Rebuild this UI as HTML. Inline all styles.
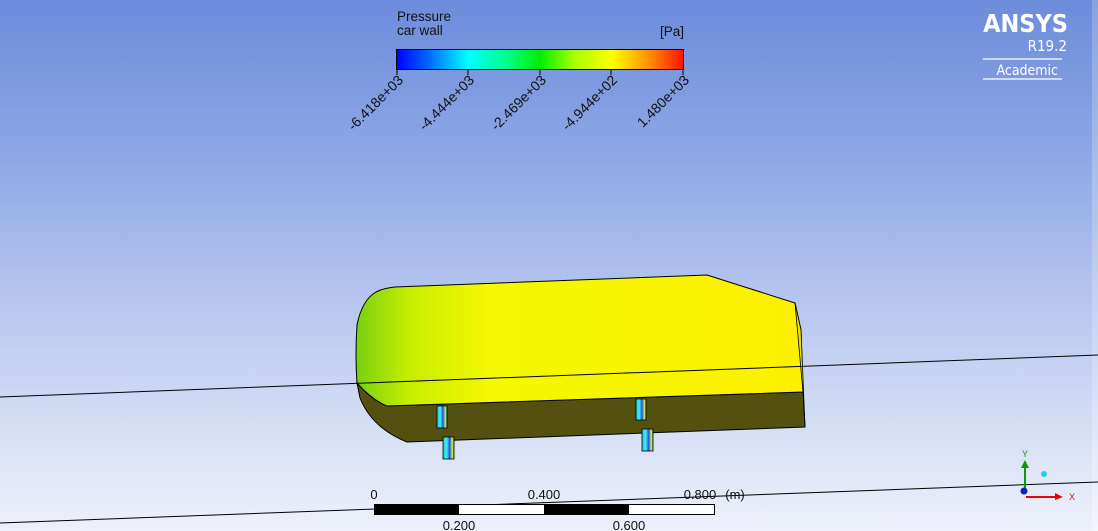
<!DOCTYPE html>
<html><head><meta charset="utf-8"><style>
html,body{margin:0;padding:0;}
body{width:1098px;height:531px;overflow:hidden;position:relative;font-family:"Liberation Sans",sans-serif;
background:linear-gradient(to bottom,#6c8cdc 0%,#8ea8e4 30%,#b4c4ee 55%,#d6def5 80%,#eef1fa 100%);}
.strip{position:absolute;right:0;top:0;width:6px;height:531px;background:linear-gradient(to bottom,#8aa2e2,#c8d4f2 60%,#f4f6fc);}
svg{position:absolute;left:0;top:0;}
</style></head><body>
<div class="strip"></div>
<svg width="1098" height="531" viewBox="0 0 1098 531">
<defs>
<linearGradient id="cb" x1="0" x2="1">
<stop offset="0" stop-color="#0000ff"/><stop offset="0.12" stop-color="#0070ff"/><stop offset="0.25" stop-color="#00ffff"/>
<stop offset="0.38" stop-color="#00ff90"/><stop offset="0.5" stop-color="#00ee00"/><stop offset="0.62" stop-color="#a8ff00"/>
<stop offset="0.75" stop-color="#ffff00"/><stop offset="0.88" stop-color="#ff9000"/><stop offset="1" stop-color="#ff1000"/>
</linearGradient>
<linearGradient id="top" x1="0" x2="1">
<stop offset="0" stop-color="#78d010"/><stop offset="0.12" stop-color="#c8ee00"/><stop offset="0.3" stop-color="#f4f800"/><stop offset="1" stop-color="#fcf000"/>
</linearGradient>
<linearGradient id="cyl" x1="0" x2="1">
<stop offset="0" stop-color="#20d0c0"/><stop offset="0.35" stop-color="#40e8ff"/><stop offset="0.6" stop-color="#2050e0"/><stop offset="0.85" stop-color="#e0f040"/><stop offset="1" stop-color="#20a080"/>
</linearGradient>
</defs>
<!-- legend -->
<text x="397" y="21" font-size="13.5" fill="#111">Pressure</text>
<text x="397" y="35" font-size="13.5" fill="#111">car wall</text>
<text x="684" y="36" font-size="13.5" fill="#111" text-anchor="end">[Pa]</text>
<rect x="396.5" y="49.5" width="287" height="20" fill="url(#cb)" stroke="#000"/>
<g stroke="#000"><line x1="397" y1="70" x2="397" y2="75"/><line x1="468" y1="70" x2="468" y2="75"/><line x1="540" y1="70" x2="540" y2="75"/><line x1="611" y1="70" x2="611" y2="75"/><line x1="683" y1="70" x2="683" y2="75"/></g>
<g font-size="14" fill="#111" text-anchor="end">
<text transform="translate(404,81) rotate(-45)">-6.418e+03</text>
<text transform="translate(475,81) rotate(-45)">-4.444e+03</text>
<text transform="translate(547,81) rotate(-45)">-2.469e+03</text>
<text transform="translate(618,81) rotate(-45)">-4.944e+02</text>
<text transform="translate(690,81) rotate(-45)">1.480e+03</text>
</g>
<!-- ANSYS logo -->
<text x="1068" y="32" font-size="25" font-weight="bold" fill="#fff" text-anchor="end" font-family="'DejaVu Sans Condensed','DejaVu Sans',sans-serif">ANSYS</text>
<text x="1067" y="51" font-size="15" fill="#fff" text-anchor="end" font-family="'DejaVu Sans Condensed','DejaVu Sans',sans-serif">R19.2</text>
<line x1="983" y1="59" x2="1062" y2="59" stroke="#e8eeff" stroke-width="1.5"/>
<text x="1058" y="75" font-size="14" fill="#fff" text-anchor="end" font-family="'DejaVu Sans Condensed','DejaVu Sans',sans-serif">Academic</text>
<line x1="983" y1="79" x2="1062" y2="79" stroke="#e8eeff" stroke-width="1.5"/>
<!-- car -->
<path d="M357,383 Q372,400 387,406 L803,392 L805,427 L407,442 Q372,428 360,398 Z" fill="#545010" stroke="#000" stroke-width="1"/>
<path d="M376,292 Q362,300 357,325 Q355,355 357,383 Q372,400 387,406 L803,392 L801,330 L795,303 L707,275 L395,287 Q384,288 376,292 Z" fill="url(#top)" stroke="#000" stroke-width="1"/>
<path d="M795,303 L801,330 L805,427 L803,392 Z" fill="#e8e000" stroke="#000" stroke-width="0.8"/>
<!-- horizon line -->
<line x1="0" y1="397" x2="1098" y2="355" stroke="#000" stroke-width="1"/>
<!-- cylinders -->
<g stroke="#000" stroke-width="0.8">
<rect x="437" y="406" width="10" height="22" fill="url(#cyl)"/>
<rect x="443" y="437" width="11" height="22" fill="url(#cyl)"/>
<rect x="636" y="399" width="10" height="21" fill="url(#cyl)"/>
<rect x="642" y="429" width="11" height="22" fill="url(#cyl)"/>
</g>
<!-- lower line -->
<line x1="0" y1="523" x2="1098" y2="482" stroke="#000" stroke-width="1"/>
<!-- scale bar -->
<g font-size="13" fill="#111" text-anchor="middle">
<text x="374" y="499">0</text><text x="544" y="499">0.400</text><text x="700" y="499">0.800</text><text x="735" y="499">(m)</text>
<text x="459" y="530">0.200</text><text x="629" y="530">0.600</text>
</g>
<rect x="374.5" y="504.5" width="340" height="10" fill="#fff" stroke="#000"/>
<rect x="374" y="504" width="85" height="11" fill="#000"/>
<rect x="544" y="504" width="85" height="11" fill="#000"/>
<!-- triad -->
<line x1="1025" y1="494" x2="1025" y2="466" stroke="#0a9a0a" stroke-width="2"/>
<polygon points="1021,468 1029,468 1025,460" fill="#0a9a0a"/>
<text x="1025" y="457" font-size="9" fill="#0a9a0a" text-anchor="middle">Y</text>
<line x1="1026" y1="497" x2="1058" y2="497" stroke="#e00" stroke-width="2"/>
<polygon points="1055,493 1063,497 1055,500" fill="#e00"/>
<text x="1072" y="500" font-size="9" fill="#e00" text-anchor="middle">X</text>
<circle cx="1024" cy="491" r="3.5" fill="#1020c0"/>
<circle cx="1044" cy="474" r="3" fill="#20d0e0"/>
</svg>
</body></html>
